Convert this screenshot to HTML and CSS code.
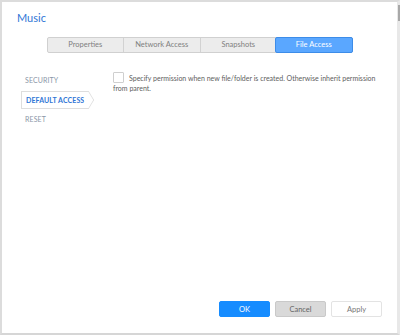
FILE: index.html
```html
<!DOCTYPE html>
<html lang="en">
<head>
    <meta charset="UTF-8">
    <meta name="viewport" content="width=device-width, initial-scale=1.0">
    <title>Music</title>
    <link rel="stylesheet" href="styles.css">
</head>
<body>
    <div class="dialog">
        <div class="scroll-thumb"></div>
        <h1 class="title">Music</h1>

        <div class="tabs">
            <div class="tab">Properties</div>
            <div class="tab">Network Access</div>
            <div class="tab">Snapshots</div>
            <div class="tab active">File Access</div>
        </div>

        <div class="main">
            <ul class="side-nav">
                <li>SECURITY</li>
                <li class="active">DEFAULT ACCESS</li>
                <li>RESET</li>
            </ul>
            <div class="content">
                <label class="check-row">
                    <span class="checkbox"></span>Specify permission when new file/folder is created. Otherwise inherit permission from parent.
                </label>
            </div>
        </div>

        <div class="footer">
            <button class="btn ok">OK</button>
            <button class="btn cancel">Cancel</button>
            <button class="btn apply">Apply</button>
        </div>
    </div>
</body>
</html>
```

FILE: styles.css
```css
html, body {
    margin: 0;
    padding: 0;
    height: 100%;
}
body {
    font-family: Lato, "Open Sans", sans-serif;
    background-color: #fff;
}
.dialog {
    position: relative;
    box-sizing: border-box;
    height: 335px;
    border-top: 2px solid #dcdcdc;
    border-left: 2px solid #dcdcdc;
    border-bottom: 2px solid #d6d6d6;
    border-right: 3px solid #e8e8e8;
    display: flex;
    flex-direction: column;
}
.scroll-thumb {
    position: absolute;
    top: 3px;
    right: -3px;
    width: 2px;
    height: 16px;
    background-color: #a8a8a8;
}
.title {
    margin: 0;
    padding: 10px 0 0 15px;
    font-size: 11px;
    font-weight: normal;
    color: #2f76d6;
    line-height: 12px;
}
.tabs {
    display: flex;
    margin: 13px auto 0;
    width: 306px;
    height: 16px;
    box-sizing: border-box;
    border: 1px solid #d0d0d0;
    border-radius: 2px;
    background-color: #ececec;
}
.tab {
    flex: 1;
    text-align: center;
    font-size: 7.5px;
    line-height: 14px;
    color: #808080;
    border-left: 1px solid #d2d2d2;
}
.tab:first-child {
    border-left: none;
}
.tab.active {
    background-color: #5aa7ff;
    color: #fff;
    border: 1px solid #3d8ce8;
    margin: -1px;
    border-radius: 2px;
    line-height: 14px;
}
.main {
    flex: 1;
    display: flex;
    padding-top: 19px;
}
.side-nav {
    list-style: none;
    margin: 0;
    padding: 0 0 0 19px;
    width: 72px;
}
.side-nav li {
    position: relative;
    height: 17px;
    margin-bottom: 2px;
    padding-left: 4px;
    font-size: 7px;
    line-height: 17px;
    color: #8b96a8;
    letter-spacing: 0.1px;
}
.side-nav li.active {
    color: #2f76d6;
    font-weight: bold;
    border: 1px solid #dedede;
    border-right: none;
    height: 16px;
    line-height: 16px;
    width: 63px;
    background-color: #fff;
}
.side-nav li.active::after {
    content: "";
    position: absolute;
    top: 2px;
    right: -6px;
    width: 11px;
    height: 11px;
    border-top: 1px solid #dedede;
    border-right: 1px solid #dedede;
    background-color: #fff;
    transform: scaleX(0.6) rotate(45deg);
}
.content {
    flex: 1;
    padding: 0 14px 0 20px;
}
.check-row {
    display: block;
    font-size: 7px;
    line-height: 10px;
    color: #606060;
}
.checkbox {
    display: inline-block;
    width: 9px;
    height: 9px;
    border: 1px solid #cfcfcf;
    border-radius: 1px;
    vertical-align: -2px;
    margin-right: 5px;
}
.footer {
    display: flex;
    justify-content: flex-end;
    gap: 5px;
    padding: 0 15px 16px 0;
}
.btn {
    width: 51px;
    height: 16px;
    padding: 0;
    font-family: Lato, "Open Sans", sans-serif;
    font-size: 7.5px;
    border-radius: 2px;
    cursor: pointer;
}
.btn.ok {
    background-color: #168cff;
    border: 1px solid #168cff;
    color: #fff;
}
.btn.cancel {
    background-color: #d9d9d9;
    border: 1px solid #c9c9c9;
    color: #666;
}
.btn.apply {
    background-color: #fff;
    border: 1px solid #e3e3e3;
    color: #777;
}
```
